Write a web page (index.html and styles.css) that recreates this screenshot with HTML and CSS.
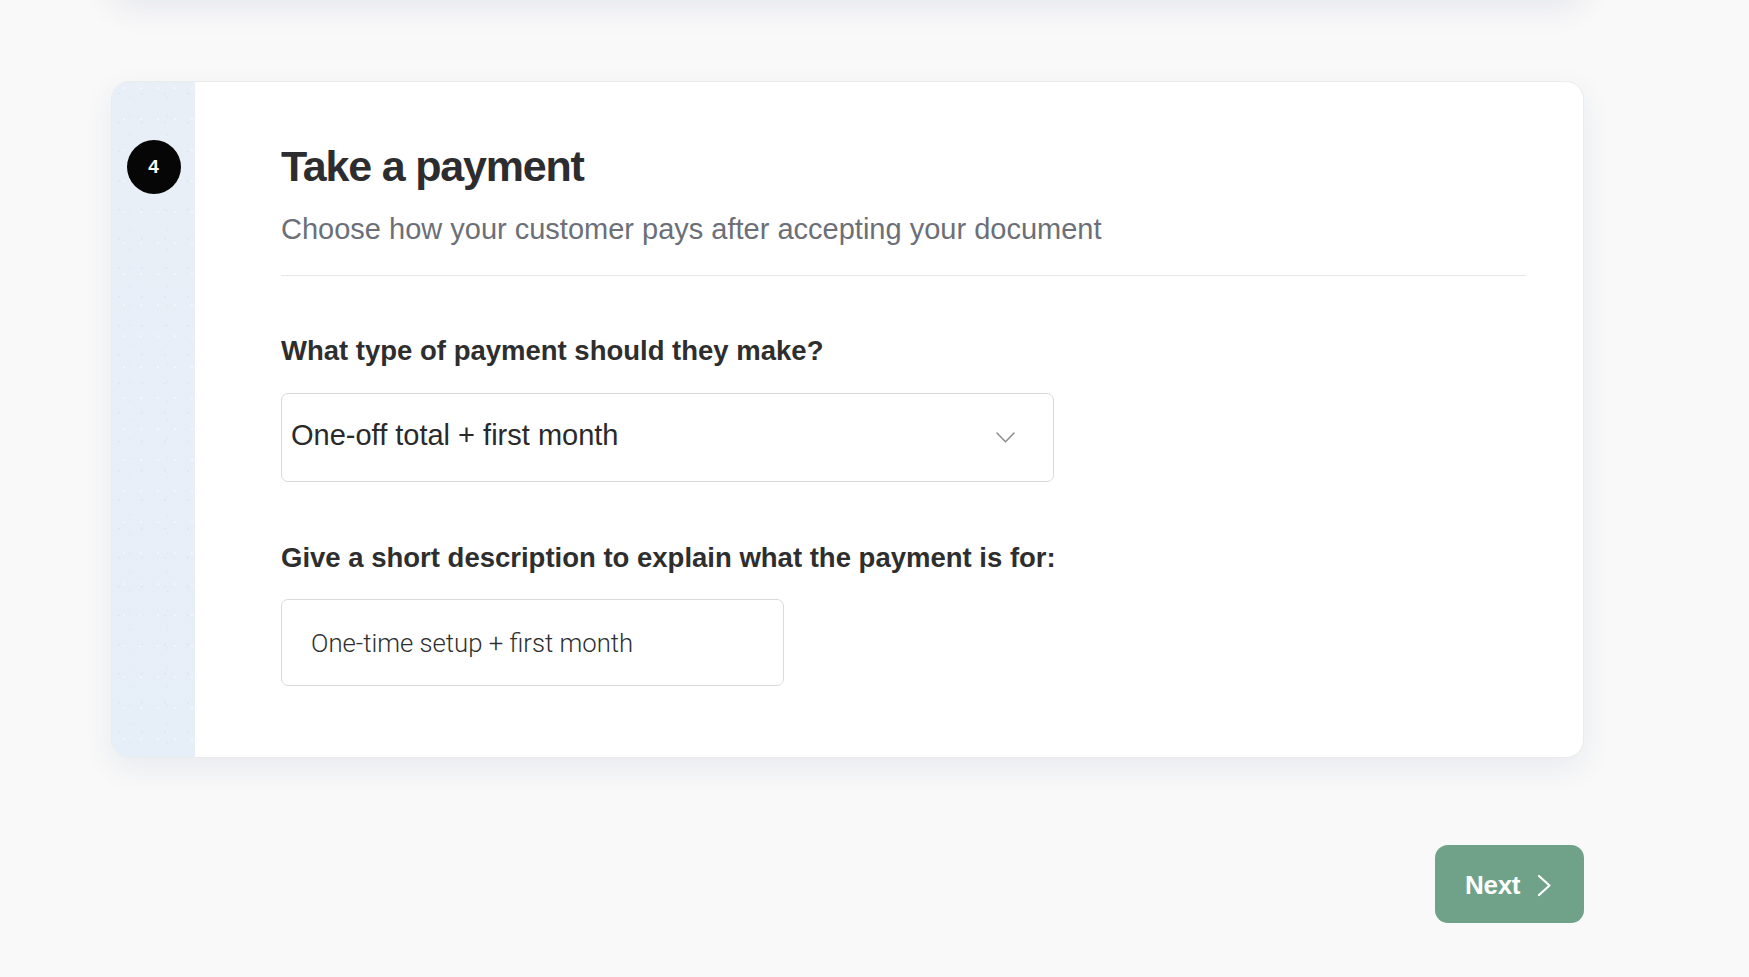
FILE: index.html
```html
<!DOCTYPE html>
<html lang="en">
<head>
<meta charset="utf-8">
<title>Take a payment</title>
<link rel="stylesheet" href="styles.css">
</head>
<body>
<div class="page">
  <div class="prev-card"></div>
  <section class="card">
    <aside class="rail">
      <div class="step">4</div>
    </aside>
    <div class="content">
      <header class="header">
        <h1 class="title">Take a payment</h1>
        <p class="subtitle">Choose how your customer pays after accepting your document</p>
      </header>
      <label class="label label-type">What type of payment should they make?</label>
      <div class="select">
        <span class="select-value">One-off total + first month</span>
        <svg class="chevron" width="19" height="11" viewBox="0 0 19 11"><polyline points="1,1 9.5,9.8 18,1" fill="none" stroke="#8c8c8c" stroke-width="1.5" stroke-linecap="round" stroke-linejoin="round"/></svg>
      </div>
      <label class="label label-desc">Give a short description to explain what the payment is for:</label>
      <input class="text-input" type="text" value="One-time setup + first month">
    </div>
  </section>
  <div class="actions">
    <button class="next-btn" type="button">
      <span>Next</span>
      <svg width="15" height="23" viewBox="0 0 15 23"><polyline points="2,2 12.5,11.5 2,21" fill="none" stroke="#ffffff" stroke-width="2.2" stroke-linecap="round" stroke-linejoin="round"/></svg>
    </button>
  </div>
</div>
</body>
</html>
```
FILE: styles.css
```css
* { box-sizing: border-box; }

html, body {
  margin: 0;
  padding: 0;
  background: #f9f9f9;
  font-family: "Liberation Sans", Arial, sans-serif;
  overflow: hidden;
}

.page {
  display: flow-root;
  width: 1473px;
  margin-left: 111px;
}

.prev-card {
  height: 60px;
  margin-top: -62px;
  background: #ffffff;
  border-radius: 18px;
  box-shadow: 0 10px 32px rgba(40, 60, 120, 0.09);
}

.card {
  display: flex;
  margin-top: 82.5px;
  background: #ffffff;
  border: 1px solid #ebebec;
  border-radius: 18px;
  overflow: hidden;
  box-shadow: 0 10px 30px rgba(40, 60, 130, 0.08);
}

.rail {
  flex: 0 0 83px;
  display: flex;
  flex-direction: column;
  align-items: center;
  background-color: #e8eff8;
  background-image:
    radial-gradient(circle at 30% 40%, rgba(200, 212, 230, 0.35) 0.7px, transparent 1.3px),
    radial-gradient(circle at 70% 20%, rgba(255, 255, 255, 0.5) 0.7px, transparent 1.3px),
    radial-gradient(circle at 50% 80%, rgba(205, 215, 232, 0.3) 0.6px, transparent 1.2px),
    linear-gradient(180deg, #e9eff7 0%, #e6eef8 100%);
  background-size: 23px 29px, 17px 31px, 37px 19px, 100% 100%;
}

.step {
  width: 54px;
  height: 54px;
  margin-top: 58px;
  border-radius: 50%;
  background: #060606;
  color: #ffffff;
  font-weight: 700;
  font-size: 19px;
  display: flex;
  align-items: center;
  justify-content: center;
}

.content {
  flex: 1;
  display: flex;
  flex-direction: column;
  align-items: flex-start;
  padding: 59.5px 57px 71px 86px;
}

.header {
  align-self: stretch;
  padding-bottom: 28.5px;
  border-bottom: 1px solid #e7e7e9;
}

.title {
  margin: 0;
  font-size: 43px;
  line-height: 1.2;
  font-weight: 700;
  letter-spacing: -1.2px;
  color: #2d2d30;
}

.subtitle {
  margin: 19px 0 0;
  font-size: 29px;
  line-height: 1.2;
  color: #6c6f78;
}

.label {
  display: block;
  font-size: 27.5px;
  line-height: 1.2;
  font-weight: 700;
  color: #2e2e2f;
}

.label-type { margin-top: 58.6px; }
.label-desc { margin-top: 59px; }

.select {
  margin-top: 25.5px;
  width: 773px;
  height: 89.5px;
  border: 1px solid #dadada;
  border-radius: 7px;
  display: flex;
  align-items: center;
  justify-content: space-between;
  padding: 0 38px 4px 9px;
}

.select-value {
  font-size: 29px;
  line-height: 1.2;
  color: #2a2a2a;
}

.chevron { margin-top: 4px; }

.text-input {
  margin-top: 24.2px;
  width: 503px;
  height: 87px;
  border: 1px solid #dadada;
  border-radius: 7px;
  padding: 2px 20px 0 29px;
  font-family: Roboto, "Liberation Sans", sans-serif;
  font-weight: 300;
  font-size: 25.7px;
  color: #2f2f2f;
  background: #ffffff;
  outline: none;
}

.actions {
  display: flex;
  justify-content: flex-end;
  margin-top: 87.5px;
}

.next-btn {
  width: 149px;
  height: 78px;
  border: none;
  border-radius: 13px;
  background: #70a189;
  color: #ffffff;
  font-family: "Liberation Sans", Arial, sans-serif;
  font-weight: 700;
  font-size: 26px;
  letter-spacing: -0.3px;
  display: flex;
  align-items: center;
  padding: 2px 0 0 30px;
  gap: 17px;
  cursor: pointer;
}
```
